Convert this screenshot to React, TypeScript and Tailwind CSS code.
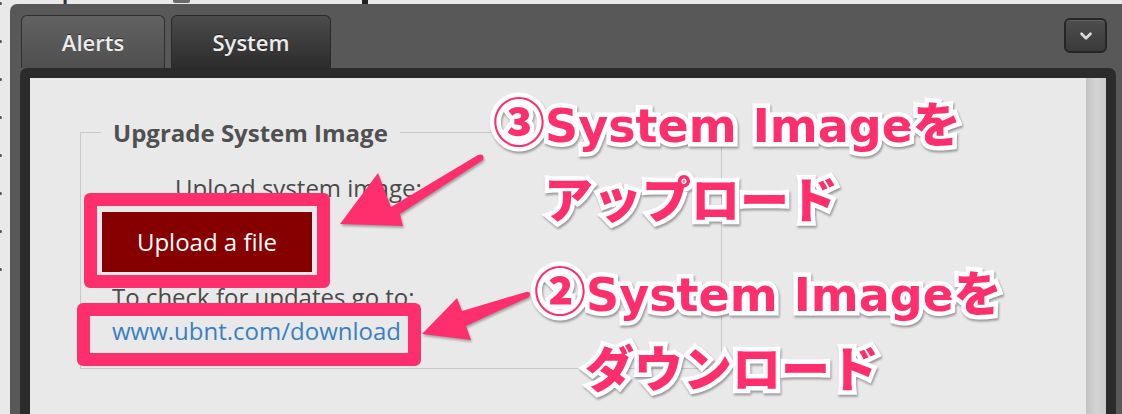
import { ChevronDown } from "lucide-react";

const ui = "font-['Open_Sans','Liberation_Sans',sans-serif]";
const mark = "text-[#ff2f6d] [-webkit-text-stroke:9px_#ffffff] [paint-order:stroke_fill] drop-shadow-[1px_2px_1px_rgba(0,0,0,0.35)]";
const jp = "font-['Noto_Sans_CJK_JP',sans-serif] font-black";
const latin = "font-['DejaVu_Sans','Noto_Sans_CJK_JP',sans-serif] font-bold";

function Caption({ num, second, className }: { num: string; second: string; className: string }) {
  return (
    <div className={`absolute flex flex-col ${className} ${mark}`}>
      <div className="flex items-baseline whitespace-nowrap leading-none">
        <span className={`${jp} text-[52px]`}>{num}</span>
        <span className={`${latin} text-[46px]`}>System Image</span>
        <span className={`${jp} text-[48px]`}>を</span>
      </div>
      <div className={`${jp} text-[49px] leading-none pl-[51px] mt-[23px] whitespace-nowrap`}>{second}</div>
    </div>
  );
}

function Arrows() {
  return (
    <svg className="absolute inset-0 pointer-events-none drop-shadow-[1px_2px_1px_rgba(0,0,0,0.3)]" width="1122" height="414">
      <path d="M340 224 L378 173 L391 207 L478 155 Q485 153 483 160 L400 214 L403 226 Z" fill="#ff2f6d" />
      <path d="M422 334 L457 298 L462 311 L526 292 Q532 291 529 297 L466 326 L471 340 Z" fill="#ff2f6d" />
    </svg>
  );
}

export default function App() {
  return (
    <div className={`relative w-[1122px] h-[414px] overflow-hidden bg-[#e9e9e9] flex ${ui}`}>
      {/* bullets of the page behind */}
      <div className="w-[10px] flex flex-col gap-[35px] pt-[2px]">
        {[0, 1, 2, 3, 4, 5, 6, 7].map((i) => (
          <div key={i} className="w-[3px] h-[3px] -ml-px rounded-full bg-[#555]" />
        ))}
      </div>

      <div className="flex-1 flex flex-col">
        <div className="h-[4px] overflow-hidden flex items-start">
          <span className="ml-[52px] w-[111px] -mt-[17px] text-[20px] leading-none font-bold text-[#333] whitespace-nowrap">port forward</span>
          <div className="w-[17px] h-[3px] bg-[#6a6a6a] rounded-b-[2px]" />
          <div className="ml-[172px] w-[6px] h-[4px] bg-[#222]" />
        </div>

        {/* modal */}
        <div className="flex-1 flex flex-col bg-[#585858] rounded-tl-[7px]">
          <div className="flex items-start justify-between pt-[11px] pl-[11px] pr-[15px]">
            <div className="flex gap-[6px]">
              <div className="w-[144px] h-[53px] flex items-center justify-center rounded-t-[6px] border border-b-0 border-[#2e2e2e] bg-gradient-to-b from-[#626262] to-[#4f4f4f] text-[22px] font-semibold text-[#ececec] [text-shadow:0_-1px_0_rgba(0,0,0,0.5)]">
                Alerts
              </div>
              <div className="w-[160px] h-[53px] flex items-center justify-center rounded-t-[6px] border border-b-0 border-[#2a2a2a] bg-gradient-to-b from-[#4c4c4c] to-[#2c2c2c] text-[22px] font-semibold text-[#ececec] [text-shadow:0_-1px_0_rgba(0,0,0,0.5)]">
                System
              </div>
            </div>
            <button className="mt-[3px] w-[43px] h-[35px] flex items-center justify-center rounded-[6px] border-2 border-[#262626] bg-gradient-to-b from-[#4e4e4e] to-[#3a3a3a] shadow-[inset_0_1px_0_rgba(255,255,255,0.12)]">
              <ChevronDown size={18} strokeWidth={3.5} className="text-[#dcdcdc]" />
            </button>
          </div>

          <div className="flex-1 flex ml-[10px] mr-[6px] bg-[#2b2b2b] rounded-t-[7px] pt-[10px] px-[10px]">
            <div className="flex-1 flex bg-[#e9e9e9]">
              <div className="flex-1">
                <div className="ml-[50px] mt-[39px] w-[642px] flex flex-col">
                  <div className="h-[31px] flex items-center">
                    <div className="w-[21px] h-px bg-[#c8c8c8]" />
                    <span className="px-[12px] text-[24px] font-bold text-[#505050] leading-none whitespace-nowrap">Upgrade System Image</span>
                    <div className="flex-1 h-px bg-[#c8c8c8]" />
                  </div>
                  <div className="-mt-[16px] h-[237px] border-x border-b border-[#c8c8c8] pt-[41px] flex flex-col items-start text-[24px] leading-[30px] text-[#4a4a4a]">
                    <span className="ml-[94px]">Upload system image:</span>
                    <button className="ml-[21px] mt-[9px] w-[210px] h-[60px] bg-[#870000] text-white text-[24px]">Upload a file</button>
                    <span className="ml-[31px] mt-[10px]">To check for updates go to:</span>
                    <a className="ml-[31px] mt-[4px] text-[#3a7fc1]">www.ubnt.com/download</a>
                  </div>
                </div>
              </div>
              <div className="w-[20px] bg-gradient-to-r from-[#c2c2c2] via-[#d4d4d4] to-[#cbcbcb]" />
            </div>
          </div>
        </div>
      </div>

      {/* annotations */}
      <div className="absolute left-[84px] top-[193px] w-[246px] h-[95px] border-[13px] border-[#ff2f6d] rounded-[6px]" />
      <div className="absolute left-[77px] top-[303px] w-[344px] h-[63px] border-[13px] border-[#ff2f6d] rounded-[6px]" />
      <Arrows />
      <Caption num="③" second="アップロード" className="left-[493px] top-[94px]" />
      <Caption num="②" second="ダウンロード" className="left-[534px] top-[263px]" />
    </div>
  );
}
